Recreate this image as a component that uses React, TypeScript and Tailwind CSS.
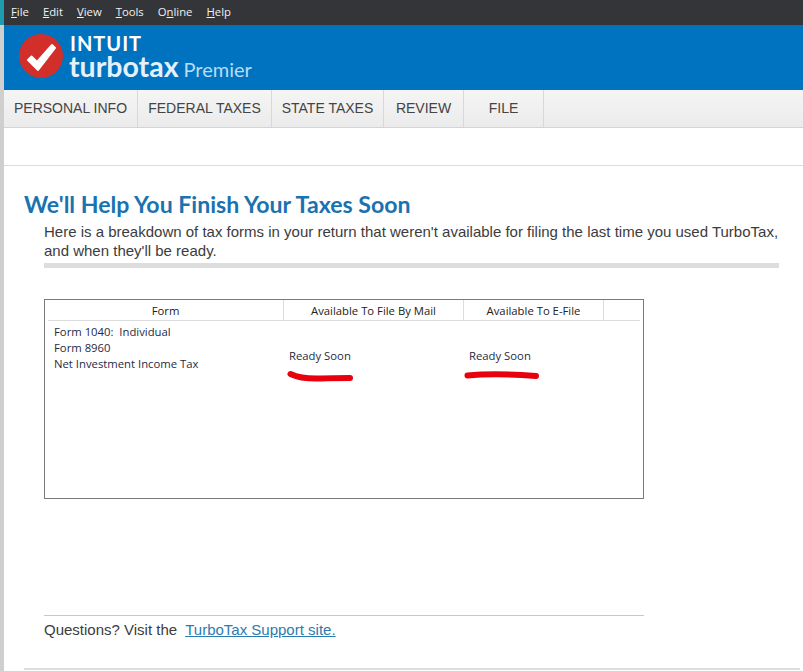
const menus = [
  { first: 'F', rest: 'ile' },
  { first: 'E', rest: 'dit' },
  { first: 'V', rest: 'iew' },
  { first: 'T', rest: 'ools' },
  { first: 'O', mid: 'n', rest: 'line' },
  { first: 'H', rest: 'elp' },
];

const tabs = [
  { label: 'PERSONAL INFO', width: 'w-[134px]' },
  { label: 'FEDERAL TAXES', width: 'w-[134px]' },
  { label: 'STATE TAXES', width: 'w-[112px]' },
  { label: 'REVIEW', width: 'w-[80px]' },
  { label: 'FILE', width: 'w-[80px]' },
];

function Logo() {
  return (
    <div className="flex items-start pl-[15px] pt-[9px]">
      <svg width="44" height="44" viewBox="0 0 44 44" className="shrink-0">
        <circle cx="22" cy="22" r="22" fill="#d22f2b" />
        <path d="M9 26 L12.500 22.500 L18 28 L33 11 L36 14 L19 36 Z" fill="#fff" stroke="#fff" strokeWidth="2" strokeLinejoin="round" />
      </svg>
      <div className="ml-[6px] flex flex-col text-white font-['Lato',sans-serif]">
        <span className="pl-[1px] text-[20px] leading-[19px] font-bold tracking-[1px]">INTUIT</span>
        <div className="flex items-baseline">
          <span className="text-[28.5px] leading-[27px] font-bold text-[#e4f1fa]">turbotax</span>
          <span className="ml-[5px] text-[20px] leading-[27px] text-[#b9dcf2]">Premier</span>
        </div>
      </div>
    </div>
  );
}

export default function App() {
  return (
    <div className="h-[671px] w-[803px] overflow-hidden bg-white font-['Liberation_Sans',sans-serif]">
      <div className="flex h-[25px]">
        <div className="w-[4px] bg-[#1f9bb0]" />
        <div className="flex flex-1 items-center gap-[14px] bg-[#343538] pl-[7px] font-['Open_Sans',sans-serif] text-[11.3px] text-[#f1f1f1]">
          {menus.map((m) => (
            <span key={m.first}>
              {m.mid ? (
                <>
                  {m.first}
                  <span className="underline">{m.mid}</span>
                  {m.rest}
                </>
              ) : (
                <>
                  <span className="underline">{m.first}</span>
                  {m.rest}
                </>
              )}
            </span>
          ))}
        </div>
      </div>

      <div className="h-[646px] border-l-[4px] border-[#cfcfcf]">
        <div className="h-[65px] bg-[#0073c0]">
          <Logo />
        </div>

        <div className="flex h-[38px] border-b border-[#d4d4d4] bg-gradient-to-b from-[#f5f5f5] to-[#ebebeb]">
          {tabs.map((t) => (
            <div
              key={t.label}
              className={`${t.width} flex items-center justify-center border-r border-[#d8d8d8] text-[14px] text-[#444444]`}
            >
              {t.label}
            </div>
          ))}
        </div>

        <div className="h-[38px] border-b border-[#dcdcdc]" />

        <div className="pl-[20px] pt-[24px]">
          <h1 className="font-['Lato',sans-serif] text-[23.1px] leading-[28px] font-bold text-[#1a72b0]">
            We'll Help You Finish Your Taxes Soon
          </h1>
          <div className="pl-[20px]">
            <p className="w-[736px] pt-[4px] text-[15px] leading-[19px] text-[#3c3c3c]">
              Here is a breakdown of tax forms in your return that weren't available for filing the last time you used TurboTax, and when they'll be ready.
            </p>
            <div className="mt-[3px] h-[5px] w-[735px] bg-[#dddddd]" />

            <div className="mt-[31px] h-[200px] w-[600px] border border-[#7a7a7a] pl-[3px] pr-[3px] font-['Open_Sans',sans-serif] text-[11.3px] text-[#1f2a44]">
              <div className="flex h-[21px] border-b border-[#dcdcdc] text-[#222222]">
                <div className="flex w-[236px] items-center justify-center border-r border-[#dcdcdc] pt-[3px]">Form</div>
                <div className="flex w-[180px] items-center justify-center border-r border-[#dcdcdc] pt-[3px]">Available To File By Mail</div>
                <div className="flex w-[140px] items-center justify-center border-r border-[#dcdcdc] pt-[3px]">Available To E-File</div>
              </div>
              <div className="flex pt-[3px]">
                <div className="w-[236px] pl-[6px] leading-[16px]">
                  <div className="whitespace-pre">Form 1040:  Individual</div>
                  <div>Form 8960</div>
                  <div>Net Investment Income Tax</div>
                </div>
                <div className="relative w-[180px] pl-[5px] pt-[24px] leading-[16px]">
                  Ready Soon
                  <svg width="70" height="14" viewBox="0 0 70 14" className="absolute left-[3px] top-[46px]">
                    <path d="M3.500 4 C12 8 22 9 34 8.500 C44 8 54 8 63 8" fill="none" stroke="#e8000d" strokeWidth="6" strokeLinecap="round" />
                  </svg>
                </div>
                <div className="relative w-[140px] pl-[5px] pt-[24px] leading-[16px]">
                  Ready Soon
                  <svg width="80" height="14" viewBox="0 0 80 14" className="absolute left-0 top-[44px]">
                    <path d="M3.500 7.500 C20 6 45 6 72 8" fill="none" stroke="#e8000d" strokeWidth="6" strokeLinecap="round" />
                  </svg>
                </div>
              </div>
            </div>

            <div className="mt-[116px] w-[600px] border-t border-[#c8c8c8] pt-[4px] text-[15px] leading-[19px] text-[#3c3c3c]">
              <span className="whitespace-pre">Questions? Visit the  </span>
              <a href="#" className="text-[#2a7cb0] underline">TurboTax Support site.</a>
            </div>
          </div>
          <div className="mt-[29px] h-[2px] w-[776px] bg-[#dddddd]" />
        </div>
      </div>
    </div>
  );
}
